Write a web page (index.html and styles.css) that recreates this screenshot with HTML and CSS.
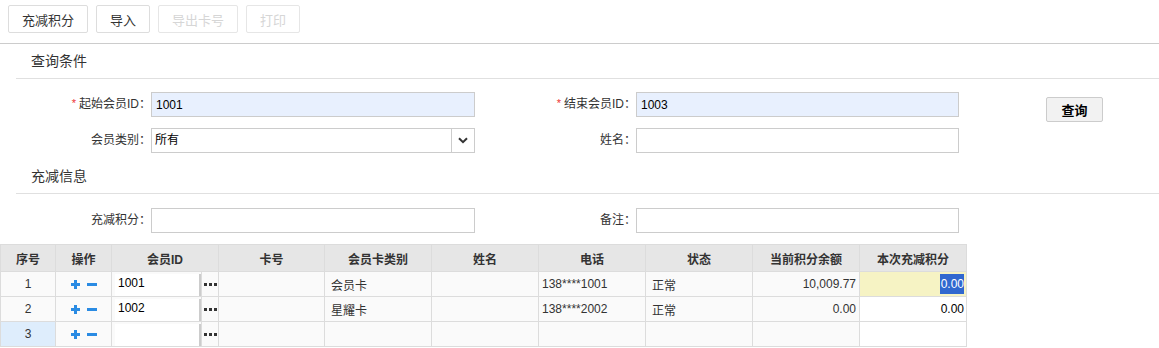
FILE: index.html
```html
<!DOCTYPE html>
<html lang="zh-CN">
<head>
  <meta charset="UTF-8">
  <title>积分充减</title>
  <link rel="stylesheet" href="styles.css">
</head>
<body>
  <div class="toolbar">
    <button class="tool-btn">充减积分</button>
    <button class="tool-btn">导入</button>
    <button class="tool-btn" disabled>导出卡号</button>
    <button class="tool-btn" disabled>打印</button>
  </div>

  <div class="section-title">查询条件</div>
  <div class="form">
    <label class="field-label"><i class="req">*</i>起始会员ID：</label>
    <input class="field-input filled" type="text" value="1001">
    <label class="field-label"><i class="req">*</i>结束会员ID：</label>
    <input class="field-input filled" type="text" value="1003">
    <span></span>
    <button class="query-btn">查询</button>

    <label class="field-label">会员类别：</label>
    <div class="select">
      <span class="select-text">所有</span>
      <span class="select-arrow">
        <svg width="10" height="7" viewBox="0 0 10 7"><path d="M1 1.2 L5 5.2 L9 1.2" fill="none" stroke="#333" stroke-width="2"/></svg>
      </span>
    </div>
    <label class="field-label">姓名：</label>
    <input class="field-input" type="text">
  </div>

  <div class="section-title second">充减信息</div>
  <div class="form form-info">
    <label class="field-label">充减积分：</label>
    <input class="field-input" type="text">
    <label class="field-label">备注：</label>
    <input class="field-input" type="text">
  </div>

  <table class="grid">
    <colgroup>
      <col style="width:55px"><col style="width:56px"><col style="width:90px"><col style="width:17px">
      <col style="width:106px"><col style="width:107px"><col style="width:107px"><col style="width:107px">
      <col style="width:107px"><col style="width:107px"><col style="width:107px">
    </colgroup>
    <thead>
      <tr>
        <th>序号</th><th>操作</th><th colspan="2">会员ID</th><th>卡号</th><th>会员卡类别</th>
        <th>姓名</th><th>电话</th><th>状态</th><th>当前积分余额</th><th>本次充减积分</th>
      </tr>
    </thead>
    <tbody>
      <tr>
        <td class="num">1</td>
        <td class="ops"><span class="plus"></span><span class="minus"></span></td>
        <td class="id-cell"><div class="id-input">1001</div></td>
        <td class="more"><span class="dots"></span></td>
        <td></td><td class="txt">会员卡</td><td></td>
        <td class="phone">138****1001</td><td class="txt">正常</td>
        <td class="amount">10,009.77</td>
        <td class="edit active"><span class="sel">0.00</span></td>
      </tr>
      <tr>
        <td class="num">2</td>
        <td class="ops"><span class="plus"></span><span class="minus"></span></td>
        <td class="id-cell"><div class="id-input">1002</div></td>
        <td class="more"><span class="dots"></span></td>
        <td></td><td class="txt">星耀卡</td><td></td>
        <td class="phone">138****2002</td><td class="txt">正常</td>
        <td class="amount">0.00</td>
        <td class="edit">0.00</td>
      </tr>
      <tr>
        <td class="num current">3</td>
        <td class="ops"><span class="plus"></span><span class="minus"></span></td>
        <td class="id-cell"><div class="id-input"></div></td>
        <td class="more"><span class="dots"></span></td>
        <td></td><td></td><td></td><td></td><td></td><td></td>
        <td class="edit"></td>
      </tr>
    </tbody>
  </table>
</body>
</html>
```

FILE: styles.css
```css
body {
  margin: 0;
  font-family: "Liberation Sans", "Noto Sans CJK SC", sans-serif;
  font-size: 12px;
  color: #333;
  background: #fff;
}
.toolbar {
  display: flex;
  gap: 8px;
  padding: 5px 8px 10px;
  border-bottom: 1px solid #ccc;
}
.tool-btn {
  height: 28px;
  padding: 0 13px;
  border: 1px solid #ddd;
  border-radius: 2px;
  background: #fff;
  font-family: inherit;
  font-size: 13px;
  color: #333;
}
.tool-btn:disabled {
  color: #d6d6d6;
  border-color: #e6e6e6;
}
.section-title {
  margin-left: 16px;
  padding-left: 15px;
  height: 34px;
  line-height: 34px;
  font-size: 14px;
  border-bottom: 1px solid #e0e0e0;
}
.section-title.second {
  margin-top: 6px;
}
.form {
  display: grid;
  grid-template-columns: 151px 324px 161px 323px 87px 57px;
  grid-auto-rows: 25px;
  row-gap: 11px;
  padding-top: 13px;
}
.form-info {
  padding-top: 14px;
}
.field-label {
  text-align: right;
  line-height: 25px;
  white-space: nowrap;
}
.req {
  font-style: normal;
  color: #e33;
  font-size: 11px;
  margin-right: 3px;
  position: relative;
  top: -1px;
}
.field-input {
  box-sizing: border-box;
  height: 25px;
  margin: 0;
  padding: 0 4px;
  border: 1px solid #ccc;
  font-family: inherit;
  font-size: 12px;
  color: #000;
  outline: none;
}
.field-input.filled {
  background: #e8f0fe;
}
.select {
  display: flex;
  box-sizing: border-box;
  height: 25px;
  border: 1px solid #ccc;
}
.select-text {
  flex: 1;
  line-height: 23px;
  padding-left: 3px;
  color: #000;
}
.select-arrow {
  width: 22px;
  border-left: 1px solid #ccc;
  display: flex;
  align-items: center;
  justify-content: center;
}
.query-btn {
  margin-top: 5px;
  height: 25px;
  border: 1px solid #ccc;
  border-radius: 2px;
  background: #f2f2f2;
  font-family: inherit;
  font-size: 13px;
  font-weight: bold;
  color: #000;
}
.grid {
  margin-top: 11px;
  border-collapse: collapse;
  table-layout: fixed;
  width: 967px;
}
.grid th, .grid td {
  border: 1px solid #dcdcdc;
  padding: 0;
  white-space: nowrap;
  overflow: hidden;
}
.grid th {
  height: 26px;
  background: #e6e6e6;
  font-weight: bold;
  font-size: 12px;
}
.grid td {
  height: 24px;
  background: #fafafa;
}
.num {
  text-align: center;
}
.num.current {
  background: #deedfc !important;
}
.ops {
  text-align: center;
}
.plus, .minus {
  display: inline-block;
  position: relative;
  vertical-align: middle;
  background: #2a8be3;
}
.plus {
  width: 9px;
  height: 3px;
  margin-right: 7px;
}
.plus::after {
  content: "";
  position: absolute;
  left: 3px;
  top: -3px;
  width: 3px;
  height: 9px;
  background: #2a8be3;
}
.minus {
  width: 10px;
  height: 3px;
}
.grid td.id-cell {
  padding: 0 0 0 3px;
}
.id-input {
  height: 22px;
  margin-top: 1px;
  background: #fff;
  color: #000;
  padding-left: 3px;
  line-height: 19px;
  border-right: 2px solid #ccc;
}
.more {
  text-align: center;
}
.dots {
  display: inline-block;
  width: 3px;
  height: 3px;
  margin-right: 10px;
  vertical-align: middle;
  background: #333;
  box-shadow: 5px 0 #333, 10px 0 #333;
}
.txt {
  padding-left: 6px !important;
}
.phone {
  padding-left: 3px !important;
}
.amount {
  text-align: right;
  padding-right: 3px !important;
}
.grid td.edit {
  background: #fff;
  text-align: right;
  padding-right: 2px;
  color: #000;
}
.grid td.edit.active {
  background: #f6f3c4;
}
.sel {
  background: #3168cf;
  color: #fff;
  padding: 3px 0 3px 1px;
}
```
